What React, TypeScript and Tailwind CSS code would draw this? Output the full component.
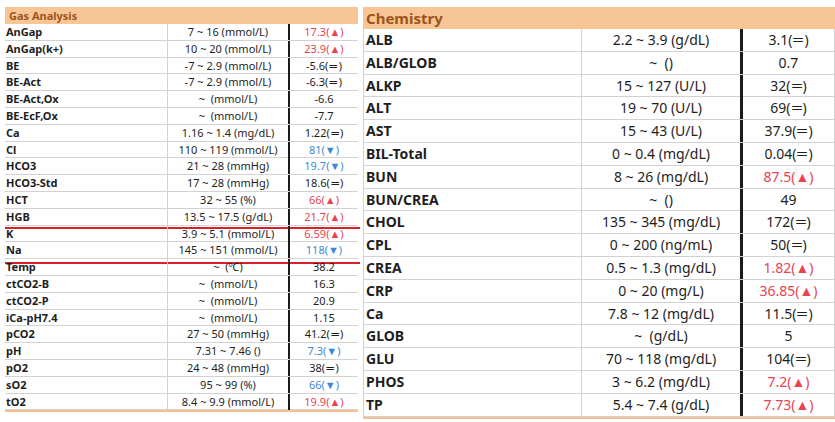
type Row = { name: string; range: string; value: string; flag?: 'up' | 'down' | 'eq'; mark?: string };

const gas: Row[] = [
  { name: 'AnGap', range: '7 ~ 16 (mmol/L)', value: '17.3', flag: 'up' },
  { name: 'AnGap(k+)', range: '10 ~ 20 (mmol/L)', value: '23.9', flag: 'up' },
  { name: 'BE', range: '-7 ~ 2.9 (mmol/L)', value: '-5.6', flag: 'eq' },
  { name: 'BE-Act', range: '-7 ~ 2.9 (mmol/L)', value: '-6.3', flag: 'eq' },
  { name: 'BE-Act,Ox', range: '~  (mmol/L)', value: '-6.6' },
  { name: 'BE-EcF,Ox', range: '~  (mmol/L)', value: '-7.7' },
  { name: 'Ca', range: '1.16 ~ 1.4 (mg/dL)', value: '1.22', flag: 'eq' },
  { name: 'Cl', range: '110 ~ 119 (mmol/L)', value: '81', flag: 'down' },
  { name: 'HCO3', range: '21 ~ 28 (mmHg)', value: '19.7', flag: 'down' },
  { name: 'HCO3-Std', range: '17 ~ 28 (mmHg)', value: '18.6', flag: 'eq' },
  { name: 'HCT', range: '32 ~ 55 (%)', value: '66', flag: 'up' },
  { name: 'HGB', range: '13.5 ~ 17.5 (g/dL)', value: '21.7', flag: 'up', mark: 'bottom-[-4px]' },
  { name: 'K', range: '3.9 ~ 5.1 (mmol/L)', value: '6.59', flag: 'up' },
  { name: 'Na', range: '145 ~ 151 (mmol/L)', value: '118', flag: 'down', mark: 'bottom-[-6px]' },
  { name: 'Temp', range: '~  (℃)', value: '38.2' },
  { name: 'ctCO2-B', range: '~  (mmol/L)', value: '16.3' },
  { name: 'ctCO2-P', range: '~  (mmol/L)', value: '20.9' },
  { name: 'iCa-pH7.4', range: '~  (mmol/L)', value: '1.15' },
  { name: 'pCO2', range: '27 ~ 50 (mmHg)', value: '41.2', flag: 'eq' },
  { name: 'pH', range: '7.31 ~ 7.46 ()', value: '7.3', flag: 'down' },
  { name: 'pO2', range: '24 ~ 48 (mmHg)', value: '38', flag: 'eq' },
  { name: 'sO2', range: '95 ~ 99 (%)', value: '66', flag: 'down' },
  { name: 'tO2', range: '8.4 ~ 9.9 (mmol/L)', value: '19.9', flag: 'up' },
];

const chem: Row[] = [
  { name: 'ALB', range: '2.2 ~ 3.9 (g/dL)', value: '3.1', flag: 'eq' },
  { name: 'ALB/GLOB', range: '~  ()', value: '0.7' },
  { name: 'ALKP', range: '15 ~ 127 (U/L)', value: '32', flag: 'eq' },
  { name: 'ALT', range: '19 ~ 70 (U/L)', value: '69', flag: 'eq' },
  { name: 'AST', range: '15 ~ 43 (U/L)', value: '37.9', flag: 'eq' },
  { name: 'BIL-Total', range: '0 ~ 0.4 (mg/dL)', value: '0.04', flag: 'eq' },
  { name: 'BUN', range: '8 ~ 26 (mg/dL)', value: '87.5', flag: 'up' },
  { name: 'BUN/CREA', range: '~  ()', value: '49' },
  { name: 'CHOL', range: '135 ~ 345 (mg/dL)', value: '172', flag: 'eq' },
  { name: 'CPL', range: '0 ~ 200 (ng/mL)', value: '50', flag: 'eq' },
  { name: 'CREA', range: '0.5 ~ 1.3 (mg/dL)', value: '1.82', flag: 'up' },
  { name: 'CRP', range: '0 ~ 20 (mg/L)', value: '36.85', flag: 'up' },
  { name: 'Ca', range: '7.8 ~ 12 (mg/dL)', value: '11.5', flag: 'eq' },
  { name: 'GLOB', range: '~  (g/dL)', value: '5' },
  { name: 'GLU', range: '70 ~ 118 (mg/dL)', value: '104', flag: 'eq' },
  { name: 'PHOS', range: '3 ~ 6.2 (mg/dL)', value: '7.2', flag: 'up' },
  { name: 'TP', range: '5.4 ~ 7.4 (g/dL)', value: '7.73', flag: 'up' },
];

const Value = ({ r }: { r: Row }) => {
  if (r.flag === 'up') return <span className="text-[#e8434f]">{r.value}(▲)</span>;
  if (r.flag === 'down') return <span className="text-[#3d88d4]">{r.value}(▼)</span>;
  if (r.flag === 'eq') return <span>{r.value}(<span className="inline-block scale-x-150 px-[2px]">=</span>)</span>;
  return <span>{r.value}</span>;
};

export default function App() {
  return (
    <div className="w-[835px] h-[422px] bg-white flex pt-[7px] pl-[5px] gap-[5px] text-[#1e1e1e]" style={{ fontFamily: '"Noto Sans", "Liberation Sans", sans-serif' }}>
      {/* Gas Analysis */}
      <div className="w-[353px] flex flex-col border-b-2 border-[#f5c096] self-start">
        <div className="h-[17px] bg-[#f8c597] text-[#9c5519] font-bold text-[11px] leading-[17px] pl-[4px]">Gas Analysis</div>
        {gas.map((r) => (
          <div key={r.name} className="relative grid grid-cols-[163px_122px_68px] h-[16.8px] text-[11px] leading-[16px] border-b border-[#d2d2d2]">
            <div className="pl-[1px] font-bold border-r border-[#d2d2d2] whitespace-nowrap">{r.name}</div>
            <div className="text-center border-r-2 border-[#1a1a1a] whitespace-pre">{r.range}</div>
            <div className="text-center whitespace-nowrap"><Value r={r} /></div>
            {r.mark && <div className={`absolute left-0 right-[-2px] h-[2px] bg-[#d52127] ${r.mark}`} />}
          </div>
        ))}
      </div>

      {/* Chemistry */}
      <div className="flex-1 flex flex-col border-b-2 border-[#f5c096] self-start">
        <div className="h-[22px] bg-[#f8c597] text-[#9c5519] font-bold text-[15px] leading-[22px] pl-[3px]">Chemistry</div>
        {chem.map((r) => (
          <div key={r.name} className="grid grid-cols-[218px_161px_1fr] h-[22.8px] text-[14px] leading-[22px] border-b border-l border-[#d2d2d2]">
            <div className="pl-[2px] font-bold border-r border-[#d2d2d2] whitespace-nowrap">{r.name}</div>
            <div className="text-center border-r-[3px] border-[#1a1a1a] whitespace-pre">{r.range}</div>
            <div className="text-center whitespace-nowrap border-r border-[#d2d2d2]"><Value r={r} /></div>
          </div>
        ))}
      </div>
    </div>
  );
}
